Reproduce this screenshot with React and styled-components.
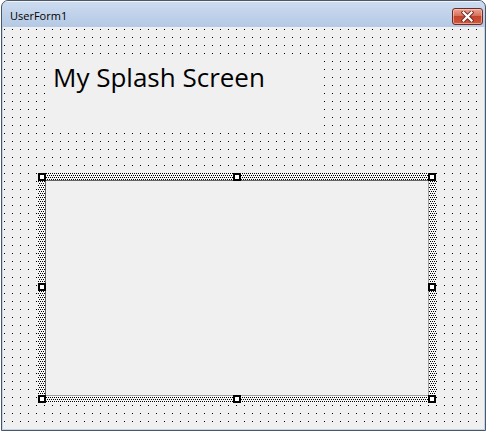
import React from "react";
import styled, { createGlobalStyle } from "styled-components";

const GlobalStyle = createGlobalStyle`
  html, body {
    margin: 0;
    padding: 0;
    background: #ffffff;
  }
`;

const Window = styled.div`
  box-sizing: border-box;
  margin-left: 1px;
  width: 485px;
  height: 431px;
  border: 1px solid #4b5666;
  border-radius: 7px 7px 0 0;
  background: linear-gradient(#cddcf0, #b4c9e4 26px, #c3d5ea 27px, #c3d5ea);
  display: flex;
  flex-direction: column;
  overflow: hidden;
`;

const TitleBar = styled.div`
  height: 26px;
  flex-shrink: 0;
  display: flex;
  align-items: flex-start;
  justify-content: space-between;
  padding: 0 2px 0 8px;
  box-shadow: inset 0 1px 0 rgba(255, 255, 255, 0.7);
`;

const Title = styled.span`
  margin-top: 8px;
  font-family: "Open Sans", "Liberation Sans", sans-serif;
  font-size: 11px;
  line-height: 14px;
  color: #000;
`;

const CloseButton = styled.div`
  box-sizing: border-box;
  margin-top: 7px;
  width: 31px;
  height: 17px;
  border: 1px solid #6e2a22;
  border-radius: 3px;
  background: linear-gradient(#e9a493, #d9705b 45%, #c4442d 50%, #cd5a3e);
  box-shadow: inset 0 0 0 1px rgba(255, 220, 210, 0.55);
  display: flex;
  align-items: center;
  justify-content: center;
`;

/* designer surface: one black pixel every 8px */
const Client = styled.div`
  position: relative;
  flex: 1;
  margin: 0 1px 1px 1px;
  background-color: #f0f0f0;
  background-image: linear-gradient(to right, #f0f0f0 7px, transparent 7px),
    linear-gradient(#f0f0f0 7px, #000 7px);
  background-size: 8px 8px;
  background-position: 2px 3px;
`;

/* controls sit on the designer canvas at their own coordinates */
const Label = styled.div`
  position: absolute;
  left: 43px;
  top: 27px;
  width: 276px;
  height: 74px;
  background: #f0f0f0;
  font-family: "Open Sans", "Liberation Sans", sans-serif;
  font-size: 26px;
  color: #000;
  padding: 5px 0 0 7px;
  box-sizing: border-box;
`;

/* selected control: staggered dot resize border */
const Selection = styled.div`
  position: absolute;
  left: 35px;
  top: 146px;
  width: 398px;
  height: 230px;
  box-sizing: border-box;
  padding: 7px;
  background-color: #f6f6f6;
  background-image: conic-gradient(at 1px 1px, transparent 75%, #000 0),
    conic-gradient(at 1px 1px, transparent 75%, #000 0);
  background-size: 2px 4px;
  background-position: 0 0, 1px 2px;
`;

const ImageControl = styled.div`
  width: 100%;
  height: 100%;
  box-sizing: border-box;
  background: #f0f0f0;
  border-top: 1px solid #646464;
  border-left: 1px solid #646464;
  border-right: 1px solid #a0a0a0;
  border-bottom: 1px solid #a0a0a0;
`;

const Handle = styled.div`
  position: absolute;
  left: ${(p) => p.$x}px;
  top: ${(p) => p.$y}px;
  width: 8px;
  height: 8px;
  box-sizing: border-box;
  border: 2px solid #000;
  background: #fff;
`;

const handles = [
  [0, 0],
  [195, 0],
  [390, 0],
  [0, 110],
  [390, 110],
  [0, 222],
  [195, 222],
  [390, 222],
];

const CloseIcon = () => (
  <svg width="13" height="11" viewBox="0 0 13 11">
    <path d="M2.5 1.5 L10.5 9.5 M10.5 1.5 L2.5 9.5" stroke="#6b2a22" strokeWidth="4" strokeLinecap="square" />
    <path d="M2.5 1.5 L10.5 9.5 M10.5 1.5 L2.5 9.5" stroke="#ffffff" strokeWidth="2.2" strokeLinecap="square" />
  </svg>
);

export default function App() {
  return (
    <>
      <GlobalStyle />
      <Window>
        <TitleBar>
          <Title>UserForm1</Title>
          <CloseButton>
            <CloseIcon />
          </CloseButton>
        </TitleBar>
        <Client>
          <Label>My Splash Screen</Label>
          <Selection>
            <ImageControl />
            {handles.map(([x, y]) => (
              <Handle key={`${x}-${y}`} $x={x} $y={y} />
            ))}
          </Selection>
        </Client>
      </Window>
    </>
  );
}
